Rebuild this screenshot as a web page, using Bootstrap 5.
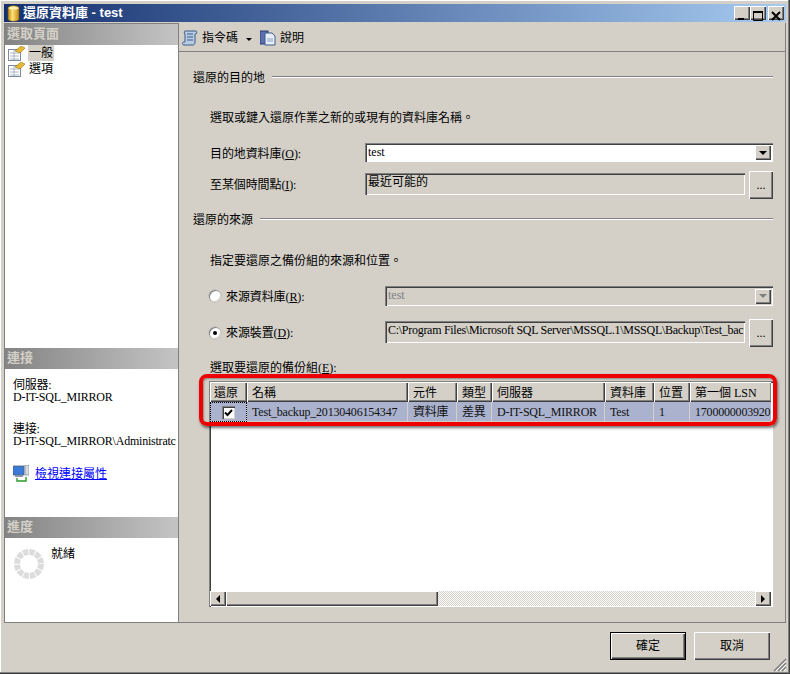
<!DOCTYPE html>
<html lang="zh-Hant">
<head>
<meta charset="utf-8">
<title>還原資料庫 - test</title>
<link href="https://cdn.jsdelivr.net/npm/bootstrap@5.3.0/dist/css/bootstrap.min.css" rel="stylesheet">
<style>
html,body{margin:0;background:#d4d0c8}
body{font:12px/16px "Liberation Serif","Noto Sans CJK TC",serif;color:#000;overflow:hidden}
.shell{position:relative;width:790px;height:674px;padding:4px 4px 1px 4px;background:#d4d0c8;box-shadow:inset -1px -1px #404040,inset -2px -2px #808080,inset 1px 1px #fff,inset 1px 0 #2a4a78}
.titlebar{height:18px;background:linear-gradient(90deg,#14306f,#a6caf0);color:#fff;font:bold 13px/18px "Liberation Sans","Noto Sans CJK TC",sans-serif;padding:0 2px 0 3px;margin-bottom:1px}
.titlebar svg{margin-right:3px}
.winbtns{gap:0}
.wb{width:16px;height:14px;background:#d4d0c8;box-shadow:inset 1px 1px #fff,inset -1px -1px #404040,inset -2px -2px #808080}
.wb-gap{margin-left:2px}
.mainarea{height:600px}
.leftpane{width:175px;border:1px solid #808080;background:#fff;flex:none}
.sechead{height:21px;flex:none;background:linear-gradient(90deg,#848484,#c4c4c4);color:#d4d0c8;font:bold 13px/20px "Liberation Sans","Noto Sans CJK TC",sans-serif;padding-left:2px}
.sec1{height:303px;flex:none}
.sec2{height:148px;flex:none;padding:10px 0 0 8px;overflow:hidden;white-space:nowrap}
.sec3{flex:1;padding:0 0 0 9px}
.spin{margin-top:11px}
.pageitem{height:16px;padding-left:3px;gap:3px}
.pagesel{background:#d4d0c8;padding:1px 1px 0;line-height:15px;height:16px}
.pagetxt{padding:1px 1px 0;line-height:15px;height:16px}
.conntext{line-height:12px;letter-spacing:-.22px}
.conngap{margin-top:20px}
.linkrow{margin-top:18px;gap:6px}
.linkrow a{color:#00f;text-decoration:underline}
.readytxt{margin-left:7px;margin-top:8px}
.rightpane{flex:1;border-right:1px solid #808080;border-bottom:1px solid #808080;min-width:0}
.toolbar{height:28px;border-bottom:1px solid #808080;padding:1px 0 0 3px;margin-top:1px;flex:none}
.tbtxt{margin-left:4px}
.tbcaret{width:0;height:0;border:3px solid transparent;border-top:3px solid #000;border-bottom:0;margin:2px 8px 0 8px}
.formarea{padding-left:14px;padding-right:12px}
.grouphead{height:16px}
.grouphead span{padding-top:2px}
.grouphead hr{flex:1;margin:0 0 0 7px;border:0;height:2px;opacity:1;background:linear-gradient(#808080 50%,#fff 50%)}
.g1{margin-top:17px}
.indent{margin-left:17px}
.desc{height:16px;padding-top:1px}
.d1{margin-top:24px}.d2{margin-top:25px}
.frow{display:flex;align-items:center;margin-left:17px}
.lab1{width:155px;flex:none;padding-top:2px;letter-spacing:-.1px}
.lab2{width:175px;flex:none;padding:2px 0 0 16px;position:relative;letter-spacing:-.1px}
.r-dest{height:19px;margin-top:18px}
.r-time{height:28px;margin-top:9px}
.r-time .lab1,.r-dev .lab2{padding-top:0}
.g2{margin-top:12px}
.r-src{height:20px;margin-top:18px}
.r-dev{height:28px;margin-top:13px}
.sel-lab{height:16px;margin-top:12px;padding-top:1px}
.sunk-gray{background:#d4d0c8;height:22px;margin-bottom:2px;padding:1px 2px 0 3px;box-shadow:inset 1px 1px #808080,inset 2px 2px #404040,inset -1px -1px #fff}
.pathtext{min-width:0;letter-spacing:-.28px;overflow:hidden;white-space:nowrap}
.sunk-dis{background:#d4d0c8;color:#808080}
.arrbtn{width:16px;height:15px;flex:none;background:#d4d0c8;box-shadow:inset 1px 1px #fff,inset -1px -1px #404040,inset -2px -2px #808080;display:flex;align-items:center;justify-content:center}
.arrbtn i{width:0;height:0;border:4px solid transparent;border-top:4px solid #000;border-bottom:0;display:block}
.arrdis i{border-top-color:#808080}
.combo{height:100%;flex:1;min-width:0;display:flex;align-items:center;padding-right:2px;padding-left:3px;box-shadow:inset 1px 1px #808080,inset 2px 2px #404040,inset -1px -1px #fff}
.combo .ctext{flex:1;padding-bottom:2px}
.dotbtn{width:24px;height:28px;flex:none;margin-left:4px;padding:0;border:0;border-radius:0;background:#d4d0c8;box-shadow:inset 1px 1px #fff,inset -1px -1px #404040,inset -2px -2px #808080;font-size:12px;line-height:26px;color:#000}
.radio{position:absolute;left:-1px;top:50%;margin-top:-6px;width:12px;height:12px;border-radius:50%;background:#fff;box-shadow:inset 1px 1px #808080,inset -1px -1px #d4d0c8,0 0 0 .5px #aaa}
.radio.on::after{content:"";position:absolute;left:4px;top:4px;width:4px;height:4px;border-radius:50%;background:#000}
.gridbox{height:226px;margin:6px 0 0 16px;background:#fff;box-shadow:inset 1px 1px #808080,inset 2px 2px #404040,inset -1px -1px #fff;padding:1px 2px 1px 1px;position:relative}
.gridscroll{flex:1;min-height:0;overflow:hidden}
.gridtable{table-layout:fixed;width:562px;margin:0;border-collapse:separate;border-spacing:0;--bs-table-bg:transparent}
.gridtable th{height:20px;padding:1px 0 0 5px;font:12px/16px "Liberation Serif","Noto Sans CJK TC",serif;background:#d4d0c8;border:0;box-shadow:inset 1px 1px #fff,inset -1px -1px #404040,inset -2px -2px #808080;white-space:nowrap;overflow:hidden;vertical-align:middle;color:#000}
.gridtable th:first-child{padding-left:4px}
.gridtable td{height:20px;padding:0 0 0 5px;background:#aab2cd;border:0;border-right:1px solid #d4d0c8;border-bottom:1px solid #d4d0c8;font:12px/16px "Liberation Serif","Noto Sans CJK TC",serif;letter-spacing:-.2px;white-space:nowrap;overflow:hidden;vertical-align:middle;color:#111}
.gridtable td.chk{padding:0;outline:1px dotted #000;outline-offset:-1px;text-align:center}
.chkbox{display:inline-flex;width:13px;height:13px;background:#fff;box-shadow:inset 1px 1px #808080,inset 2px 2px #404040,inset -1px -1px #d4d0c8;vertical-align:middle}
.hscroll{height:15px;flex:none;display:flex;background:repeating-conic-gradient(#d4d0c8 0 25%,#fff 0 50%) 0 0/2px 2px}
.sbtn{width:16px;height:15px;flex:none;background:#d4d0c8;box-shadow:inset 1px 1px #fff,inset -1px -1px #404040,inset -2px -2px #808080;display:flex;align-items:center;justify-content:center}
.sthumb{width:212px;height:15px;flex:none;background:#d4d0c8;box-shadow:inset 1px 1px #fff,inset -1px -1px #404040,inset -2px -2px #808080}
.sfill{flex:1}
.tri-l{border:4px solid transparent;border-right:4px solid #000;border-left:0}
.tri-r{border:4px solid transparent;border-left:4px solid #000;border-right:0}
.redmark{position:absolute;left:-10px;top:-7px;width:578px;height:52px;border:4px solid #ee0000;border-radius:8px;box-shadow:1px 2px 3px rgba(0,0,0,.55),inset 1px 1px 2px rgba(0,0,0,.35);pointer-events:none}
.bottombar{height:49px;padding:9px 16px 0 0;gap:8px}
.winbtn{width:76px;height:28px;padding:0;border:0;border-radius:0;background:#d4d0c8;font-size:12px;line-height:26px;color:#000;box-shadow:inset 1px 1px #fff,inset -1px -1px #404040,inset -2px -2px #808080}
.winbtn-def{outline:1px solid #000;outline-offset:-1px;box-shadow:inset 2px 2px #fff,inset -2px -2px #404040,inset -3px -3px #808080}
.grip{position:absolute;right:3px;bottom:2px}
</style>
</head>
<body>
<div class="shell d-flex flex-column">
  <div class="titlebar d-flex align-items-center">
    <svg width="13" height="17" viewBox="0 0 13 17"><defs><linearGradient id="cyl" x1="0" x2="1"><stop offset="0" stop-color="#b8860b"/><stop offset=".4" stop-color="#ffe27a"/><stop offset="1" stop-color="#c48a10"/></linearGradient></defs><path d="M1 3c0-3 11-3 11 0v11c0 3-11 3-11 0z" fill="url(#cyl)" stroke="#7a5a10" stroke-width=".6"/><ellipse cx="6.500" cy="3" rx="5" ry="1.600" fill="#fff2b0"/></svg>
    <span>還原資料庫 - test</span>
    <div class="winbtns d-flex ms-auto">
      <div class="wb"><svg width="16" height="14" viewBox="0 0 16 14"><rect x="4" y="9" width="6" height="2" fill="#000"/></svg></div>
      <div class="wb"><svg width="16" height="14" viewBox="0 0 16 14"><path d="M3.500 2.500h9v9h-9z" fill="none" stroke="#000"/><rect x="3" y="2" width="10" height="2" fill="#000"/></svg></div>
      <div class="wb wb-gap"><svg width="16" height="14" viewBox="0 0 16 14"><path d="M4 3l8 8M12 3l-8 8" stroke="#000" stroke-width="2"/></svg></div>
    </div>
  </div>
  <div class="mainarea d-flex">
    <div class="leftpane d-flex flex-column">
      <div class="sechead">選取頁面</div>
      <div class="sec1">
        <div class="pageitem d-flex align-items-center">
          <svg width="17" height="15" viewBox="0 0 17 15"><rect x=".5" y="3.500" width="12" height="11" fill="#fff" stroke="#7a8a9a"/><path d="M2 7h9M2 10h9M2 13h9M6 4v10" stroke="#a8b4c0"/><path d="M7 5l6-5 4 2-5 5z" fill="#e8b830" stroke="#806010" stroke-width=".5"/></svg>
          <span class="pagesel">一般</span>
        </div>
        <div class="pageitem d-flex align-items-center">
          <svg width="17" height="15" viewBox="0 0 17 15"><rect x=".5" y="3.500" width="12" height="11" fill="#fff" stroke="#7a8a9a"/><path d="M2 7h9M2 10h9M2 13h9M6 4v10" stroke="#a8b4c0"/><path d="M7 5l6-5 4 2-5 5z" fill="#e8b830" stroke="#806010" stroke-width=".5"/></svg>
          <span class="pagetxt">選項</span>
        </div>
      </div>
      <div class="sechead">連接</div>
      <div class="sec2">
        <div class="conntext">伺服器:</div>
        <div class="conntext">D-IT-SQL_MIRROR</div>
        <div class="conntext conngap">連接:</div>
        <div class="conntext">D-IT-SQL_MIRROR\Administratc</div>
        <div class="linkrow d-flex align-items-center">
          <svg width="16" height="17" viewBox="0 0 16 17"><rect x="0" y="1" width="11" height="9" fill="#3a7ad8" stroke="#50607a" stroke-width=".8"/><rect x="2" y="10" width="8" height="2" fill="#8a96a8"/><rect x="12" y="0" width="4" height="10" fill="#d8dce4" stroke="#6a7484" stroke-width=".6"/><path d="M4 13v3h9v-4" fill="none" stroke="#2a9a2a" stroke-width="1.400"/></svg>
          <a href="#">檢視連接屬性</a>
        </div>
      </div>
      <div class="sechead">進度</div>
      <div class="sec3 d-flex align-items-start">
        <svg class="spin" width="30" height="30" viewBox="0 0 30 30"><circle cx="15" cy="15" r="12" fill="none" stroke="#dcdcdc" stroke-width="6" stroke-dasharray="5.280 1"/></svg>
        <span class="readytxt">就緒</span>
      </div>
    </div>
    <div class="rightpane d-flex flex-column">
      <div class="toolbar d-flex align-items-center">
        <svg width="16" height="16" viewBox="0 0 16 16"><path d="M3 1h11c1 0 1 3 0 3h-1v8c0 2-1 3-2 3H2c-2 0-2-3 0-3h1V4C2 3 2 1 3 1z" fill="#b8cce4" stroke="#3a5a8a"/><path d="M5 4h6M5 7h6M5 10h6" stroke="#3a5a8a"/></svg>
        <span class="tbtxt">指令碼</span>
        <span class="tbcaret"></span>
        <svg width="16" height="16" viewBox="0 0 16 16"><rect x="0" y="1" width="8" height="13" fill="#5a70b0" stroke="#2a3a70"/><path d="M5 3h7l3 3v9H5z" fill="#e8eef8" stroke="#3a5a8a"/><path d="M7 9h6M7 11h6" stroke="#8aa0c8"/></svg>
        <span class="tbtxt">說明</span>
      </div>
      <div class="formarea d-flex flex-column flex-grow-1">
        <div class="grouphead g1 d-flex align-items-center"><span>還原的目的地</span><hr></div>
        <div class="desc d1 indent">選取或鍵入還原作業之新的或現有的資料庫名稱。</div>
        <div class="frow r-dest">
          <span class="lab1">目的地資料庫(<u>O</u>):</span>
          <div class="combo bg-white"><span class="ctext">test</span><span class="arrbtn"><i></i></span></div>
        </div>
        <div class="frow r-time">
          <span class="lab1">至某個時間點(<u>I</u>):</span>
          <div class="sunk-gray flex-grow-1">最近可能的</div>
          <button class="btn dotbtn" type="button">...</button>
        </div>
        <div class="grouphead g2 d-flex align-items-center"><span>還原的來源</span><hr></div>
        <div class="desc d2 indent">指定要還原之備份組的來源和位置。</div>
        <div class="frow r-src">
          <span class="lab2"><span class="radio"></span>來源資料庫(<u>R</u>):</span>
          <div class="combo sunk-dis"><span class="ctext">test</span><span class="arrbtn arrdis"><i></i></span></div>
        </div>
        <div class="frow r-dev">
          <span class="lab2"><span class="radio on"></span>來源裝置(<u>D</u>):</span>
          <div class="sunk-gray flex-grow-1 pathtext">C:\Program Files\Microsoft SQL Server\MSSQL.1\MSSQL\Backup\Test_bac</div>
          <button class="btn dotbtn" type="button">...</button>
        </div>
        <div class="sel-lab indent">選取要還原的備份組(<u>E</u>):</div>
        <div class="gridbox d-flex flex-column">
          <div class="gridscroll">
            <table class="table gridtable">
              <colgroup><col width="37"><col width="161"><col width="49"><col width="35"><col width="113"><col width="49"><col width="36"><col width="82"></colgroup>
              <thead><tr><th>還原</th><th>名稱</th><th>元件</th><th>類型</th><th>伺服器</th><th>資料庫</th><th>位置</th><th>第一個 LSN</th></tr></thead>
              <tbody><tr>
                <td class="chk"><span class="chkbox"><svg width="13" height="13" viewBox="0 0 13 13"><path d="M3 6.500l2.500 2.500L10 4" fill="none" stroke="#000" stroke-width="2"/></svg></span></td>
                <td>Test_backup_20130406154347</td><td>資料庫</td><td>差異</td><td>D-IT-SQL_MIRROR</td><td>Test</td><td>1</td><td>1700000003920</td>
              </tr></tbody>
            </table>
          </div>
          <div class="hscroll">
            <span class="sbtn"><i class="tri-l"></i></span>
            <span class="sthumb"></span>
            <span class="sfill"></span>
            <span class="sbtn"><i class="tri-r"></i></span>
          </div>
          <div class="redmark"></div>
        </div>
      </div>
    </div>
  </div>
  <div class="bottombar d-flex justify-content-end">
    <button class="btn winbtn winbtn-def" type="button">確定</button>
    <button class="btn winbtn" type="button">取消</button>
  </div>
  <svg class="grip" width="14" height="14" viewBox="0 0 14 14"><path d="M13 1L1 13M13 5L5 13M13 9L9 13" stroke="#808080" stroke-width="1.500"/><path d="M13 3L3 13M13 7L7 13M13 11L11 13" stroke="#fff"/></svg>
</div>
</body>
</html>
